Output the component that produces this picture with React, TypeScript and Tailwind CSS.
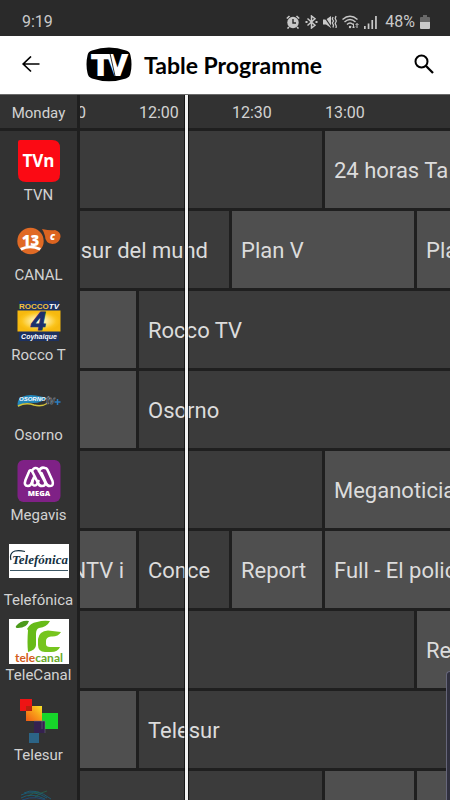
import type { ReactNode } from 'react';

interface Programme {
  title?: string;
  span: number;
  next?: boolean;
  // started before the visible window, so the title is cut on the left
  cut?: 'wide' | 'narrow';
}

interface Channel {
  name: string;
  logo: ReactNode;
  programmes: Programme[];
}

function TvnLogo() {
  return (
    <svg width="42" height="42" viewBox="0 0 42 42" aria-hidden="true">
      <path d="M2 0H34Q42 0 42 8V34Q42 42 34 42H8Q0 42 0 34V2Q0 0 2 0Z" fill="#fb0a14" />
      <text x="20.5" y="27" textAnchor="middle" fill="#fff" fontFamily="Open Sans, sans-serif" fontWeight="700" fontSize="17">
        TVn
      </text>
    </svg>
  );
}

function CanalLogo() {
  return (
    <svg width="44" height="28" viewBox="0 0 44 28" aria-hidden="true">
      <circle cx="13.5" cy="14" r="13.2" fill="#e06a25" />
      <path d="M25 2Q34 4 38 3Q44 5 43.500 10Q42 17 35.500 17Q28 16 28 9Q27 5 25 2Z" fill="#dc6420" />
      <text x="13.5" y="19" textAnchor="middle" fill="#fff" fontFamily="Open Sans, sans-serif" fontWeight="800" fontSize="15">
        13
      </text>
      <path d="M3 21Q13 16 24 21L22.500 23.500Q13 19 4.500 23.500Z" fill="#fff" />
      <text x="35.5" y="12.500" textAnchor="middle" fill="#fff" fontFamily="Open Sans, sans-serif" fontStyle="italic" fontWeight="800" fontSize="10">
        c
      </text>
    </svg>
  );
}

function RoccoLogo() {
  return (
    <svg width="44" height="42" viewBox="0 0 44 42" aria-hidden="true">
      <defs>
        <radialGradient id="rocco">
          <stop offset="0.15" stopColor="#fffbd0" />
          <stop offset="0.8" stopColor="#fbc41c" />
          <stop offset="1" stopColor="#f6b90f" />
        </radialGradient>
      </defs>
      <rect x="2" y="1" width="40" height="40" fill="#1d3160" />
      <rect x="0.5" y="10.500" width="43" height="21" fill="url(#rocco)" />
      <text x="22" y="9" textAnchor="middle" fill="#f3c13a" fontFamily="Liberation Sans, sans-serif" fontWeight="700" fontSize="8">
        ROCCO<tspan fill="#fff" fontStyle="italic">TV</tspan>
      </text>
      <text x="21.5" y="30" textAnchor="middle" fill="#1c2f6c" stroke="#1c2f6c" fontFamily="Liberation Sans, sans-serif" fontStyle="italic" fontWeight="700" fontSize="26">
        4
      </text>
      <text x="22" y="38.500" textAnchor="middle" fill="#fff" fontFamily="Liberation Sans, sans-serif" fontStyle="italic" fontWeight="700" fontSize="7">
        Coyhaique
      </text>
    </svg>
  );
}

function OsornoLogo() {
  return (
    <svg width="44" height="16" viewBox="0 0 44 16" aria-hidden="true">
      <path d="M1 8Q4 2 14 2Q24 3 29 5Q25 10 16 10Q8 9 1 14Q0 11 1 8Z" fill="#2388bd" />
      <path d="M1 13Q9 9 17 12Q25 14 31 10" fill="none" stroke="#d3c33b" strokeWidth="1.500" />
      <text x="2" y="8" fill="#fff" fontFamily="Liberation Sans, sans-serif" fontStyle="italic" fontWeight="700" fontSize="6">
        OSORNO
      </text>
      <text x="29" y="11" fill="#20252e" stroke="#a8b2bd" strokeWidth="0.400" fontFamily="Liberation Sans, sans-serif" fontStyle="italic" fontWeight="700" fontSize="10">
        tv
      </text>
      <path d="M37.500 9H43.500M40.500 6V12" stroke="#2b7ec2" strokeWidth="1.500" />
    </svg>
  );
}

function MegaLogo() {
  return (
    <svg width="44" height="44" viewBox="0 0 44 44" aria-hidden="true">
      <rect x="0.5" y="1" width="43" height="42" rx="6" fill="#7f2186" />
      <g fill="none" stroke="#fff" strokeWidth="2.600" strokeLinejoin="round" strokeLinecap="round">
        <path d="M21.500 22Q20 27 17 26.500Q14.500 26 15.500 21.500" />
        <path d="M15.500 11Q18 7.500 21 10L28 23Q29 27 25 27Q22 27 21 24L15.500 13Q13 9 11.500 14L8.500 21Q6.500 27 11 27Q14 27 15 23L17.500 17" />
        <path d="M22 12Q24 7.500 28 9Q30 9 31 12L35.500 22Q37 27 33 27Q30 27 29 24L24.500 14" />
      </g>
      <text x="22" y="37" textAnchor="middle" fill="#fff" fontFamily="Open Sans, sans-serif" fontWeight="800" fontSize="7.500">
        MEGA
      </text>
    </svg>
  );
}

function TelefonicaLogo() {
  return (
    <svg width="60" height="53" viewBox="0 0 60 53" aria-hidden="true">
      <rect y="7" width="60" height="34" fill="#fff" />
      <text x="31" y="27" textAnchor="middle" fill="#14303f" fontFamily="Liberation Serif, serif" fontStyle="italic" fontWeight="700" fontSize="13">
        Telefónica
      </text>
      <path d="M2 23Q0 16 6 14Q10 13 16 14.500" fill="none" stroke="#14303f" strokeWidth="1.200" />
      <path d="M1 33.500H59" stroke="#3d5866" />
    </svg>
  );
}

function TelecanalLogo() {
  return (
    <svg width="60" height="45" viewBox="0 0 60 45" aria-hidden="true">
      <rect width="60" height="45" fill="#fff" />
      <path d="M7 7Q12 1 20 2Q18 9 9 9Q6 9 7 7Z" fill="#4b9a1a" />
      <path d="M18 10Q21 4 28 3Q34 1 41 2Q38 8 30 9Q27 10 27 15V26Q27 31 19 33Q18 24 19 11Z" fill="#67bb18" />
      <path d="M52 13Q49 18 42 17.500Q37 18 37 22V25Q37 28 41 28H51Q49 33 42 33H36Q29 33 29 26V20Q30 12 39 11.500Z" fill="#76c51e" />
      <text x="30" y="43" textAnchor="middle" fill="#d25c20" fontFamily="Lato, sans-serif" fontWeight="700" fontSize="12">
        tele<tspan fill="#68a928">canal</tspan>
      </text>
    </svg>
  );
}

function TelesurLogo() {
  return (
    <svg width="38" height="44" viewBox="0 0 38 44" aria-hidden="true">
      <defs>
        <linearGradient id="sun" x1="0" y1="1" x2="1" y2="0">
          <stop stopColor="#f05a14" />
          <stop offset="0.6" stopColor="#f9a51a" />
          <stop offset="1" stopColor="#f7e428" />
        </linearGradient>
      </defs>
      <rect x="6" y="7" width="16" height="15" fill="url(#sun)" />
      <rect x="0" y="0" width="12" height="12" fill="#ee1414" />
      <rect x="6" y="7" width="6" height="5" fill="#b8200e" />
      <rect x="22" y="14" width="16" height="16" fill="#17d52a" />
      <rect x="14" y="22" width="11" height="12" fill="#35214f" />
      <path d="M14 22H25V34M22 22V30" fill="none" stroke="#7a7f85" strokeWidth="0.500" />
      <rect x="9" y="34" width="10" height="10" fill="#2c6486" />
    </svg>
  );
}

function StreaksLogo() {
  return (
    <svg width="44" height="36" viewBox="0 0 44 36" fill="none" aria-hidden="true">
      <path d="M4 12Q16 6 30 15M7 10Q18 4 34 16M4 15Q14 9 28 16" stroke="#1c5a73" />
      <path d="M22 9Q17 9 11 13M30 8Q24 9 18 14" stroke="#256b50" strokeWidth="0.700" />
      <path d="M5 17Q20 11 34 20" stroke="#204a78" />
    </svg>
  );
}

const channels: Channel[] = [
  {
    name: 'TVN',
    logo: <TvnLogo />,
    programmes: [{ span: 3 }, { title: '24 horas Ta', span: 2, next: true }],
  },
  {
    name: 'CANAL',
    logo: <CanalLogo />,
    programmes: [
      { title: 'sur del mund', span: 2, cut: 'wide' },
      { title: 'Plan V', span: 2, next: true },
      { title: 'Plan V', span: 1, next: true },
    ],
  },
  {
    name: 'Rocco T',
    logo: <RoccoLogo />,
    programmes: [{ span: 1, next: true }, { title: 'Rocco TV', span: 4 }],
  },
  {
    name: 'Osorno',
    logo: <OsornoLogo />,
    programmes: [{ span: 1, next: true }, { title: 'Osorno', span: 4 }],
  },
  {
    name: 'Megavis',
    logo: <MegaLogo />,
    programmes: [{ span: 3 }, { title: 'Meganoticias', span: 2, next: true }],
  },
  {
    name: 'Telefónica',
    logo: <TelefonicaLogo />,
    programmes: [
      { title: 'NTV i', span: 1, next: true, cut: 'narrow' },
      { title: 'Conce', span: 1 },
      { title: 'Report', span: 1, next: true },
      { title: 'Full - El policial', span: 2, next: true },
    ],
  },
  {
    name: 'TeleCanal',
    logo: <TelecanalLogo />,
    programmes: [{ span: 4 }, { title: 'Report', span: 1, next: true }],
  },
  {
    name: 'Telesur',
    logo: <TelesurLogo />,
    programmes: [{ span: 1, next: true }, { title: 'Telesur', span: 4 }],
  },
  {
    name: '',
    logo: <StreaksLogo />,
    programmes: [{ span: 3 }, { span: 1, next: true }, { span: 1, next: true }],
  },
];

const padding = {
  none: 'pl-[9px]',
  wide: 'flex justify-end pr-[21px]',
  narrow: 'flex justify-end pr-3',
};

function StatusBar() {
  return (
    <div className="flex h-9 shrink-0 items-center justify-between bg-[#2a2a2a] pt-2 pr-5 pl-[22px] text-base text-[#c9c9c9]">
      <span>9:19</span>
      <div className="flex items-center gap-[5px]">
        <svg width="14" height="14" viewBox="0 0 14 14" aria-hidden="true">
          <circle cx="7" cy="7.500" r="5.700" fill="#c9c9c9" />
          <path d="M0.800 3.500L3.500 1M13.200 3.500L10.500 1M3 12L1.500 13.500M11 12L12.500 13.500" stroke="#c9c9c9" strokeWidth="1.600" />
          <path d="M7 4V8H10" fill="none" stroke="#2a2a2a" strokeWidth="1.400" />
        </svg>
        <svg width="13" height="14" viewBox="0 0 13 14" fill="none" stroke="#c9c9c9" strokeWidth="1.500" aria-hidden="true">
          <path d="M2.500 3.500L10 10.300L6.500 13V1L10 3.700L2.500 10.500" />
          <path d="M0.500 7H2.500M10.500 7H12.500" strokeWidth="1.800" />
        </svg>
        <svg width="14" height="14" viewBox="0 0 14 14" fill="none" stroke="#c9c9c9" aria-hidden="true">
          <path d="M0 4.500H3L8 1V13L3 9.500H0Z" fill="#c9c9c9" stroke="none" />
          <path d="M0.500 0.500L9 13" stroke="#2a2a2a" strokeWidth="1.200" />
          <path d="M10 2L9.300 4L10.500 6L9.300 8L10.500 10L10 12.500M13 1L12.200 3.500L13.300 6L12.200 8.500L13.300 11L13 13" strokeWidth="1.300" />
        </svg>
        <svg width="17" height="14" viewBox="0 0 17 14" fill="none" stroke="#c9c9c9" strokeWidth="1.400" aria-hidden="true">
          <path d="M0.500 4.500Q8 -2 15.500 4.500M2.500 7Q8 2 13.500 7M5 9.500Q8 6.500 11 9.500" />
          <circle cx="8" cy="12" r="1.200" fill="#c9c9c9" stroke="none" />
          <path d="M11.500 8.500V13M10 11.500L11.500 13L13 11.500M15 13V8.500M13.600 10L15 8.500L16.500 10" strokeWidth="1" />
        </svg>
        <svg width="13" height="13" viewBox="0 0 13 13" fill="#c9c9c9" aria-hidden="true">
          <path d="M0 10H1.700V13H0ZM3.700 7.500H5.400V13H3.700ZM7.400 4H9.100V13H7.400ZM11.100 0H12.800V13H11.100Z" />
        </svg>
        <span className="pl-[3px]">48%</span>
        <svg width="10" height="14" viewBox="0 0 10 14" aria-hidden="true">
          <path d="M3 0H7V2H9Q10 2 10 3V7H0V3Q0 2 1 2H3Z" fill="#686868" />
          <path d="M0 7H10V13Q10 14 9 14H1Q0 14 0 13Z" fill="#c9c9c9" />
        </svg>
      </div>
    </div>
  );
}

function Header() {
  return (
    <header className="flex h-[58px] shrink-0 items-center bg-white pr-[15px] pl-5 text-black">
      <button type="button" aria-label="Back" className="mr-[45px]">
        <svg width="21" height="18" viewBox="0 0 21 18" fill="none" stroke="currentColor" strokeWidth="1.700">
          <path d="M19.500 8H3M11 0.500L3.200 8L11 15.500" />
        </svg>
      </button>
      <svg width="46" height="36" viewBox="0 0 46 36" aria-hidden="true">
        <path d="M6 3.500Q23 -2.500 40 3.500Q44 4.500 44.500 8.500Q46.500 17 44.500 26Q44 30 40 31.500Q23 37 6 31.500Q2 30 1.500 26Q-0.500 17 1.500 8.500Q2 4.500 6 3.500Z" fill="#000" />
        <g fill="#fff" stroke="#fff" strokeWidth="2" fontFamily="Liberation Sans, sans-serif" fontWeight="700" fontSize="29">
          <text x="14.500" y="28" textAnchor="middle">
            T
          </text>
          <text x="31.500" y="28" textAnchor="middle">
            V
          </text>
        </g>
        <path d="M23.700 5L29 29" stroke="#000" strokeWidth="0.800" />
      </svg>
      <h1 className="flex-1 pl-3 font-[Lato] text-[23px] leading-7 font-bold">Table Programme</h1>
      <button type="button" aria-label="Search">
        <svg width="22" height="22" viewBox="0 0 22 22" fill="none" stroke="currentColor" strokeWidth="2">
          <circle cx="8.500" cy="7.500" r="6" />
          <path d="M12.800 11.800L20 19" strokeWidth="2.300" />
        </svg>
      </button>
    </header>
  );
}

function Schedule() {
  return (
    <table className="w-full table-fixed border-separate border-spacing-0">
      <colgroup>
        <col className="w-20" />
        <col className="w-[59px]" />
        <col className="w-[93px]" />
        <col className="w-[93px]" />
        <col className="w-[92px]" />
        <col />
      </colgroup>
      <thead>
        <tr className="h-9 bg-[#323232] text-left text-base text-[#d2d2d2] [&>th]:border-b-[3px] [&>th]:border-[#1f1f1f] [&>th]:p-0 [&>th]:pt-[3px] [&>th]:font-normal">
          <th scope="col" className="border-r-[3px] text-center text-[15px]">
            Monday
          </th>
          <th scope="col">
            <div className="flex justify-end overflow-hidden pr-[53px]">11:30</div>
          </th>
          <th scope="col">12:00</th>
          <th scope="col">12:30</th>
          <th scope="col">13:00</th>
          <th />
        </tr>
      </thead>
      <tbody>
        {channels.map((channel) => (
          <tr key={channel.name} className="h-20">
            <th scope="row" className="border-r-[3px] border-[#1f1f1f] bg-[#323232] p-0 align-top font-normal">
              <div className="flex flex-col items-center pt-1.5">
                <div className="flex min-h-12 items-center">{channel.logo}</div>
                <span className="text-[15px] leading-5 text-[#d2d2d2]">{channel.name}</span>
              </div>
            </th>
            {channel.programmes.map((programme, index) => (
              <td
                key={index}
                colSpan={programme.span}
                className={`border-r-[3px] border-b-[3px] border-[#1f1f1f] p-0 pt-0.5 text-[22px] leading-7 text-[#dcdcdc] last:border-r-0 ${
                  programme.next ? 'bg-[#4f4f4f]' : 'bg-[#3b3b3b]'
                }`}
              >
                <div className={`overflow-hidden whitespace-nowrap ${padding[programme.cut ?? 'none']}`}>
                  {programme.title}
                </div>
              </td>
            ))}
          </tr>
        ))}
      </tbody>
    </table>
  );
}

export default function App() {
  return (
    <div className="flex h-screen flex-col overflow-hidden bg-[#323232] font-[Roboto,sans-serif]">
      <StatusBar />
      <Header />
      <main className="relative min-h-0 flex-1 overflow-hidden border-t border-[#6a6a6a]">
        <Schedule />
        {/* Current time */}
        <div className="absolute inset-y-0 left-[184px] w-[5px] border-x border-black/60 bg-[#f2f2f2] bg-clip-padding" />
        {/* Edge panel handle */}
        <div className="absolute right-0 bottom-0 h-[129px] w-1 rounded-tl border-t border-l border-[#66667a] bg-[#30303e]" />
      </main>
    </div>
  );
}
